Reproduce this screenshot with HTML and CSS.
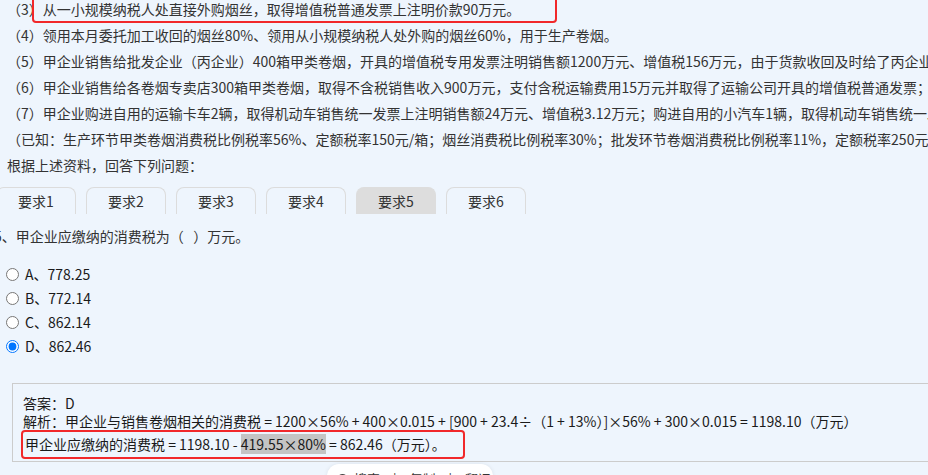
FILE: index.html
```html
<!DOCTYPE html>
<html lang="zh-CN">
<head>
<meta charset="utf-8">
<title>要求5</title>
<link rel="stylesheet" href="styles.css">
</head>
<body>
<div class="page">
  <div class="material">
    <p class="line mark-line">（3）从一小规模纳税人处直接外购烟丝，取得增值税普通发票上注明价款90万元。<span class="mark-top"></span></p>
    <p class="line">（4）领用本月委托加工收回的烟丝80%、领用从小规模纳税人处外购的烟丝60%，用于生产卷烟。</p>
    <p class="line">（5）甲企业销售给批发企业（丙企业）400箱甲类卷烟，开具的增值税专用发票注明销售额1200万元、增值税156万元，由于货款收回及时给了丙企业2%的现金折扣。</p>
    <p class="line">（6）甲企业销售给各卷烟专卖店300箱甲类卷烟，取得不含税销售收入900万元，支付含税运输费用15万元并取得了运输公司开具的增值税普通发票；</p>
    <p class="line">（7）甲企业购进自用的运输卡车2辆，取得机动车销售统一发票上注明销售额24万元、增值税3.12万元；购进自用的小汽车1辆，取得机动车销售统一发票。</p>
    <p class="line">（已知：生产环节甲类卷烟消费税比例税率56%、定额税率150元/箱；烟丝消费税比例税率30%；批发环节卷烟消费税比例税率11%，定额税率250元/箱。）</p>
    <p class="line lead">根据上述资料，回答下列问题：</p>
  </div>

  <div class="tabs">
    <div class="tab">要求1</div>
    <div class="tab">要求2</div>
    <div class="tab">要求3</div>
    <div class="tab">要求4</div>
    <div class="tab tab-active">要求5</div>
    <div class="tab">要求6</div>
  </div>

  <p class="question">5、甲企业应缴纳的消费税为（&nbsp;&nbsp;&nbsp;）万元。</p>

  <div class="options">
    <label class="option"><input type="radio" name="q5"><span>A、778.25</span></label>
    <label class="option"><input type="radio" name="q5"><span>B、772.14</span></label>
    <label class="option"><input type="radio" name="q5"><span>C、862.14</span></label>
    <label class="option"><input type="radio" name="q5" checked><span>D、862.46</span></label>
  </div>

  <div class="answer">
    <div class="answer-line">答案：D</div>
    <div class="answer-line">解析：甲企业与销售卷烟相关的消费税 = 1200×56% + 400×0.015 + [900 + 23.4÷（1 + 13%）]×56% + 300×0.015 = 1198.10（万元）</div>
    <div class="answer-mark">甲企业应缴纳的消费税 = 1198.10 - <span class="hl">419.55×80%</span> = 862.46（万元）。</div>
  </div>
</div>

<div class="popup">
  <span class="popup-icon"></span>
  <span class="popup-text">搜索　|　复制　|　翻译</span>
</div>
</body>
</html>
```

FILE: styles.css
```css
html, body {
  margin: 0;
  padding: 0;
}

body {
  width: 928px;
  height: 475px;
  overflow: hidden;
  background: #eef5fd;
  font-family: "Noto Sans CJK SC", "Microsoft YaHei", sans-serif;
  font-size: 14px;
  color: #333;
  position: relative;
}

.page {
  width: 928px;
  height: 475px;
  overflow: hidden;
}

.material {
  margin-top: -4px;
  padding-left: 7px;
}

.line {
  margin: 0;
  height: 26px;
  line-height: 26px;
  white-space: nowrap;
}

.mark-line {
  position: relative;
}

.mark-top {
  position: absolute;
  left: 25px;
  top: -6px;
  width: 521px;
  height: 29px;
  border: 2.5px solid #f1282a;
  border-radius: 4px;
}

.tabs {
  display: flex;
  gap: 10px;
  margin-top: 9px;
  margin-left: -4px;
}

.tab {
  flex: 0 0 80px;
  height: 27px;
  box-sizing: border-box;
  border: 1px solid #dcdcdc;
  border-bottom: none;
  border-radius: 8px 8px 0 0;
  text-align: center;
  line-height: 27px;
  color: #333;
}

.tab-active {
  background: #dddddd;
  border-color: #dddddd;
}

.question {
  margin: 10px 0 0 -6px;
  height: 24px;
  line-height: 24px;
  white-space: nowrap;
}

.options {
  margin-top: 14px;
  display: flex;
  flex-direction: column;
}

.option {
  display: flex;
  align-items: center;
  height: 24px;
  color: #1a1a1a;
}

.option input {
  margin: 0 6px 0 6px;
  width: 13px;
  height: 13px;
}

.answer {
  margin-top: 25px;
  margin-left: 12px;
  width: 940px;
  border: 1px solid #cccccc;
  padding: 10px 0 2px 10px;
  color: #1a1a1a;
}

.answer-line {
  height: 18px;
  line-height: 18px;
  white-space: nowrap;
}

.answer-mark {
  margin-left: -2px;
  width: 438px;
  height: 25px;
  line-height: 25px;
  padding-left: 2px;
  border: 2px solid #f1282a;
  border-radius: 4px;
  white-space: nowrap;
}

.hl {
  background: #c4c4c4;
}

.popup {
  position: absolute;
  left: 327px;
  top: 464px;
  width: 166px;
  height: 36px;
  background: #ffffff;
  border-radius: 12px;
  box-shadow: 0 0 4px rgba(0, 0, 0, 0.08);
  display: flex;
  align-items: flex-start;
  gap: 6px;
  padding: 7px 0 0 10px;
  box-sizing: border-box;
  font-size: 13px;
  color: #333;
}

.popup-icon {
  width: 11px;
  height: 11px;
  border-radius: 50%;
  background: #444;
  margin-top: 3px;
}

.popup-text {
  line-height: 16px;
}
```
